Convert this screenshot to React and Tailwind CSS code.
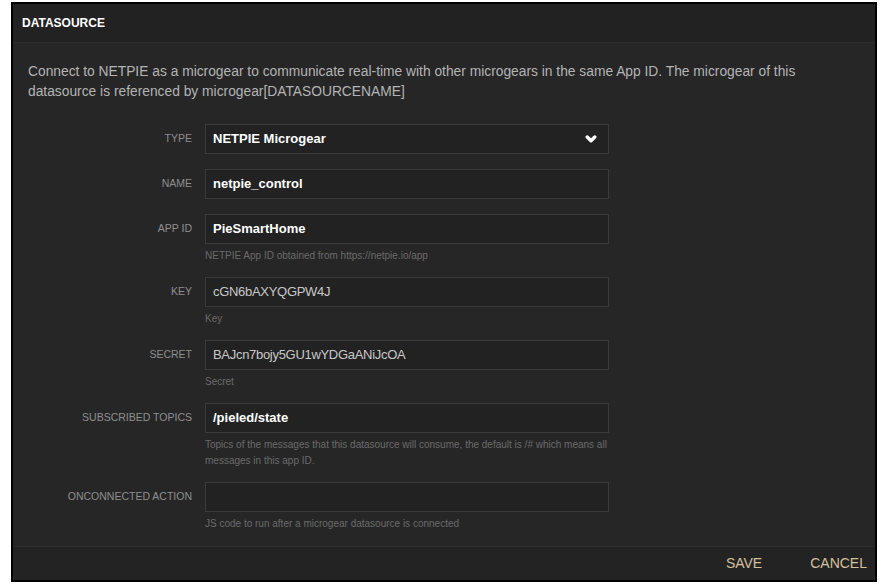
import React from "react";

const font = { fontFamily: '"Liberation Sans", Arial, sans-serif' };

const Chevron = () => (
  <svg width="12" height="10" viewBox="0 0 12 10" className="mr-[4px]">
    <path
      d="M2.2 3 L6 6.8 L9.8 3"
      fill="none"
      stroke="#ffffff"
      strokeWidth="3.4"
      strokeLinecap="round"
      strokeLinejoin="round"
    />
  </svg>
);

const Field = ({ label, hint, children }) => (
  <div className={`flex ${hint ? "pb-[13px]" : "pb-[15px]"}`}>
    <div className="w-[170px] h-[30px] flex items-center justify-end text-[10.5px] uppercase text-[#8e8e8e]">
      {label}
    </div>
    <div className="ml-[13px] w-[404px]">
      {children}
      {hint && (
        <div className="mt-[4px] text-[10px] leading-[16px] text-[#6a6a6a]">{hint}</div>
      )}
    </div>
  </div>
);

const TextInput = ({ value, dim }) => (
  <div
    className={`h-[30px] border border-[#3a3a3a] bg-[#222222] px-[7px] flex items-center text-[13px] ${
      dim ? "text-[#c8c8c8] font-normal tracking-[-0.3px]" : "text-white font-bold"
    }`}
  >
    {value}
  </div>
);

export default function App() {
  return (
    <div className="w-[882px] h-[587px] bg-white pt-[2px] pl-[11px]" style={font}>
      <div className="w-[866px] h-[580px] border-2 border-black bg-[#262626] flex flex-col">
        {/* header */}
        <div className="h-[39px] bg-[#222222] border-b border-[#2d2d2d] px-[9px] flex items-center">
          <span className="text-[12px] font-bold text-white">DATASOURCE</span>
        </div>

        {/* body */}
        <div className="flex-1 pl-[9px]">
          <p className="pt-[19px] pl-[6px] text-[13.8px] leading-[20px] text-[#b4b4b4]">
            Connect to NETPIE as a microgear to communicate real-time with other microgears in the same App ID. The microgear of this
            <br />
            datasource is referenced by microgear[DATASOURCENAME]
          </p>

          <div className="mt-[22px]">
            <Field label="Type">
              <div className="h-[30px] border border-[#3a3a3a] bg-[#222222] px-[7px] flex items-center justify-between text-[13px] font-bold text-white">
                <span>NETPIE Microgear</span>
                <Chevron />
              </div>
            </Field>
            <Field label="Name">
              <TextInput value="netpie_control" />
            </Field>
            <Field label="App ID" hint="NETPIE App ID obtained from https://netpie.io/app">
              <TextInput value="PieSmartHome" />
            </Field>
            <Field label="Key" hint="Key">
              <TextInput value="cGN6bAXYQGPW4J" dim />
            </Field>
            <Field label="Secret" hint="Secret">
              <TextInput value="BAJcn7bojy5GU1wYDGaANiJcOA" dim />
            </Field>
            <Field
              label="Subscribed Topics"
              hint="Topics of the messages that this datasource will consume, the default is /# which means all messages in this app ID."
            >
              <TextInput value="/pieled/state" />
            </Field>
            <Field label="Onconnected Action" hint="JS code to run after a microgear datasource is connected">
              <TextInput value="" />
            </Field>
          </div>
        </div>

        {/* footer */}
        <div className="h-[34px] border-t border-[#2d2d2d] bg-[#232323] flex items-center justify-end pr-[8px] text-[14px] text-[#d2c19c]">
          <button className="px-0">SAVE</button>
          <button className="ml-[48px] px-0">CANCEL</button>
        </div>
      </div>
    </div>
  );
}
